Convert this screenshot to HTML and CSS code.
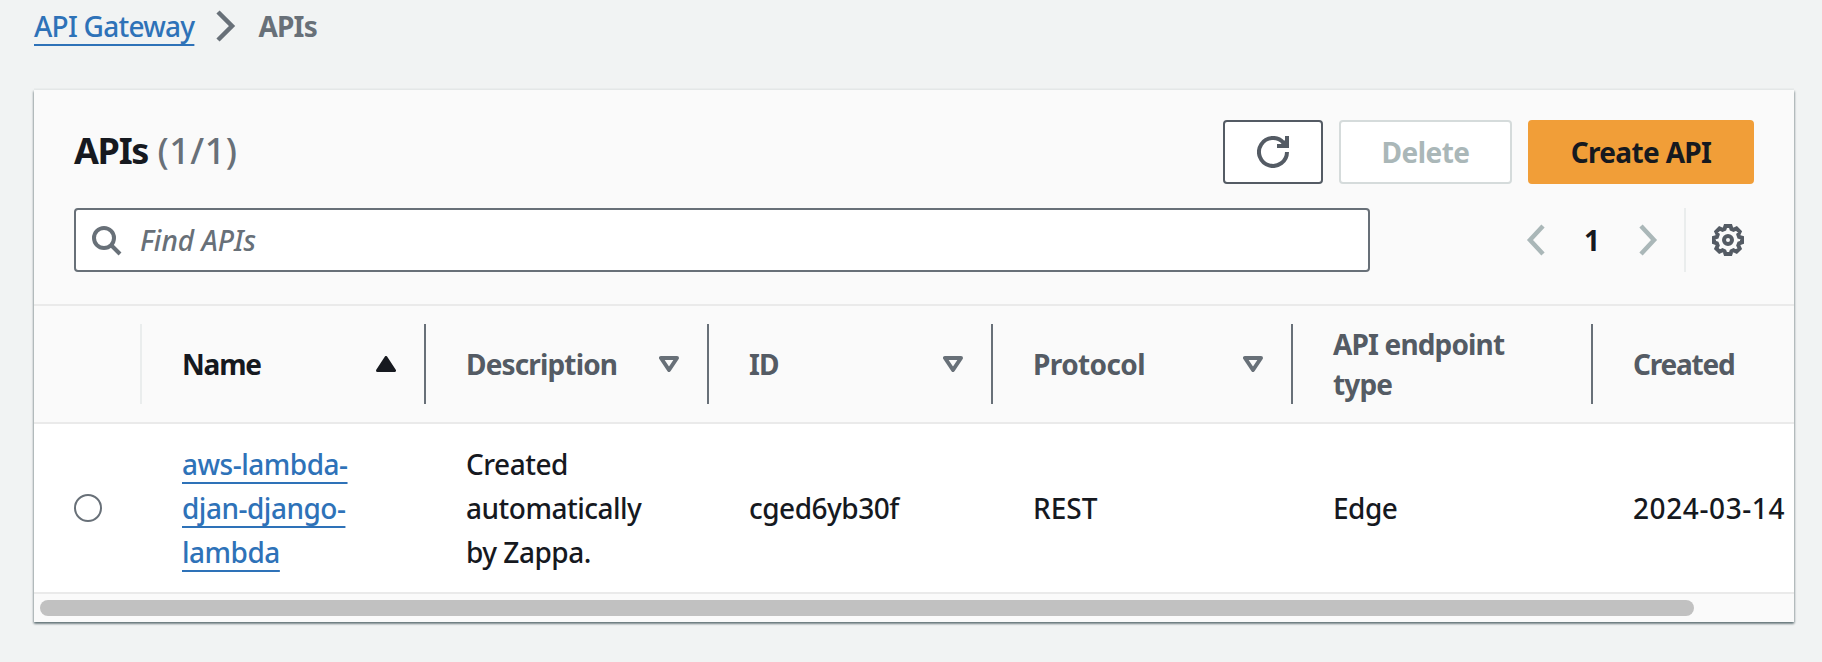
FILE: index.html
```html
<!DOCTYPE html>
<html lang="en">
<head>
<meta charset="utf-8">
<title>API Gateway - APIs</title>
<link rel="stylesheet" href="styles.css">
</head>
<body>
<nav class="crumbs">
  <a class="link crumb-link" href="#">API Gateway</a>
  <svg class="crumb-sep" width="20" height="32" viewBox="0 0 20 32"><path d="M2 2 16 16 2 30"/></svg>
  <span class="crumb-current">APIs</span>
</nav>
<main class="panel">
  <header class="panel-head">
    <div class="title-row">
      <h1 class="title"><span class="title-name">APIs</span> <span class="count">(1/1)</span></h1>
      <div class="actions">
        <button class="btn btn-refresh" aria-label="Refresh"><svg width="32" height="32" viewBox="0 0 32 32"><path d="M30 16a14 14 0 1 1-3.500-9.300L29 9.500"/><path d="M20 10h10V0"/><path class="tip" d="M22 10l7 0V3z"/></svg></button>
        <button class="btn btn-delete" disabled><span>Delete</span></button>
        <button class="btn btn-create"><span>Create API</span></button>
      </div>
    </div>
    <div class="tools-row">
      <div class="search">
        <svg width="32" height="32" viewBox="0 0 32 32"><circle cx="14" cy="14" r="10"/><path d="m21 21 9 9"/></svg>
        <span class="placeholder">Find APIs</span>
      </div>
      <div class="pager">
        <svg class="arrow" width="20" height="32" viewBox="0 0 20 32"><path d="M17 2 4 16l13 14"/></svg>
        <span class="page">1</span>
        <svg class="arrow" width="20" height="32" viewBox="0 0 20 32"><path d="m3 2 13 14L3 30"/></svg>
      </div>
      <div class="prefs">
        <svg width="32" height="32" viewBox="0 0 32 32"><path d="M13.500 2h5l1 3 2 .9 3-1.400 3.200 3.200-1.400 3 .8 2.100 2.900 1v4.600l-2.900 1-.8 2.100 1.400 3-3.200 3.200-3-1.400-2 .9-1 2.800h-5l-1-2.800-2-.9-3 1.400-3.200-3.200 1.400-3-.8-2.100-2.900-1v-4.600l2.900-1 .8-2.100-1.400-3 3.200-3.200 3 1.400 2-.9z"/><circle cx="16" cy="16" r="4"/></svg>
      </div>
    </div>
  </header>
  <div class="grid thead">
    <div class="th th-select"></div>
    <div class="th th-sorted"><span class="w-name">Name</span><svg class="sort" width="20" height="16" viewBox="0 0 20 16"><path class="solid" d="M10 1.500 18.500 14.500h-17z"/></svg></div>
    <div class="th"><span class="w-desc">Description</span><svg class="sort" width="20" height="16" viewBox="0 0 20 16"><path d="M2 2h16l-8 12z"/></svg></div>
    <div class="th"><span class="w-id">ID</span><svg class="sort" width="20" height="16" viewBox="0 0 20 16"><path d="M2 2h16l-8 12z"/></svg></div>
    <div class="th"><span class="w-proto">Protocol</span><svg class="sort" width="20" height="16" viewBox="0 0 20 16"><path d="M2 2h16l-8 12z"/></svg></div>
    <div class="th"><span class="w-endpoint">API endpoint<br>type</span></div>
    <div class="th th-last"><span class="w-created">Created</span></div>
  </div>
  <div class="grid row">
    <div class="td td-select"><span class="radio"></span></div>
    <div class="td"><a class="link name-link" href="#">aws-lambda-<br>djan-django-<br>lambda</a></div>
    <div class="td"><span>Created<br>automatically<br>by Zappa.</span></div>
    <div class="td"><span>cged6yb30f</span></div>
    <div class="td"><span class="rest">REST</span></div>
    <div class="td"><span>Edge</span></div>
    <div class="td"><span class="date">2024-03-14</span></div>
  </div>
  <div class="scroll"><div class="thumb"></div></div>
</main>
</body>
</html>
```

FILE: styles.css
```css
* { box-sizing: border-box; }
body {
  margin: 0;
  height: 662px;
  overflow: hidden;
  padding: 0 28px 0 34px;
  background: #f1f3f3;
  color: #16191f;
  font: 500 28px/44px "Noto Sans", "Open Sans", sans-serif;
}
svg { display: block; flex: none; fill: none; }
.crumbs { display: flex; align-items: center; height: 52px; margin-bottom: 38px; }
.link { color: #2e72b8; text-decoration: underline; text-decoration-thickness: 2px; text-underline-offset: 7px; text-decoration-skip-ink: none; }
.crumb-link { letter-spacing: -.75px; }
.crumb-sep { margin: 0 22px 0 22px; stroke: #687078; stroke-width: 4.5; }
.crumb-current { color: #687078; font-weight: 700; letter-spacing: -.8px; }
.panel {
  height: 532px;
  background: #fafafa;
  box-shadow: 0 2px 2px 0 rgba(0, 28, 36, .4), 1px 1px 2px 0 rgba(0, 28, 36, .2), -1px 1px 2px 0 rgba(0, 28, 36, .2), 0 -2px 0 0 #eaeded;
}
.panel-head { height: 216px; padding: 30px 40px 0; border-bottom: 2px solid #eaeaea; }
.title-row { display: flex; justify-content: space-between; align-items: center; height: 64px; }
.title { margin: 0 0 3px; font-size: 36px; line-height: 44px; }
.title-name { letter-spacing: -1.3px; }
.count { color: #687078; font-weight: 500; letter-spacing: .5px; }
.actions { display: flex; gap: 16px; }
.btn { display: flex; align-items: center; justify-content: center; height: 64px; padding: 0; border: 2px solid #545b64; border-radius: 4px; background: #fff; color: #16191f; font: 700 28px/40px "Noto Sans", sans-serif; }
.btn-refresh { width: 100px; stroke: #545b64; stroke-width: 4; }
.tip { fill: #545b64; stroke: none; }
.btn-delete { width: 173px; border-color: #d5dbdb; color: #aab7b8; letter-spacing: -.5px; }
.btn-create { width: 226px; border-color: #f19e38; background: #f19e38; letter-spacing: -.65px; }
.tools-row { display: flex; margin-top: 24px; height: 64px; }
.search { display: flex; align-items: center; width: 1296px; padding-left: 14px; border: 2px solid #687078; border-radius: 4px; background: #fff; color: #687078; font-style: italic; }
.search svg { margin-right: 18px; stroke: #687078; stroke-width: 4; }
.pager { display: flex; align-items: center; margin-left: 156px; }
.arrow { stroke: #aab7b8; stroke-width: 4.5; }
.page { width: 92px; text-align: center; font-weight: 700; }
.prefs { display: flex; align-items: center; margin-left: 26px; padding-left: 26px; border-left: 2px solid #eaeded; stroke: #545b64; stroke-width: 4; }
.grid { display: grid; grid-template-columns: 108px 284px 283px 284px 300px 300px 201px; }
.thead { height: 118px; padding-top: 18px; border-bottom: 2px solid #eaeaea; color: #545b64; font-weight: 700; line-height: 40px; letter-spacing: -.85px; }
.th { display: flex; align-items: center; justify-content: space-between; height: 80px; padding: 0 28px 0 40px; border-right: 2px solid #687078; white-space: nowrap; }
.w-name, .w-created { letter-spacing: -1.2px; }
.w-proto { letter-spacing: -.6px; }
.th-select { border-color: #eaeded; }
.th-sorted { color: #16191f; }
.th-last { border: 0; }
.sort { stroke: #687078; stroke-width: 4; stroke-linejoin: round; }
.solid { fill: #16191f; stroke: #16191f; stroke-width: 3; }
.row { height: 170px; border-bottom: 2px solid #eaeaea; background: #fff; letter-spacing: -.5px; }
.td { display: flex; align-items: center; padding-left: 40px; white-space: nowrap; }
.rest { letter-spacing: 0; }
.date { letter-spacing: .6px; }
.radio { width: 28px; height: 28px; border: 2px solid #687078; border-radius: 50%; }
.scroll { padding: 6px 6px 0; }
.thumb { width: 1654px; height: 16px; border-radius: 8px; background: #c1c1c1; }
```
